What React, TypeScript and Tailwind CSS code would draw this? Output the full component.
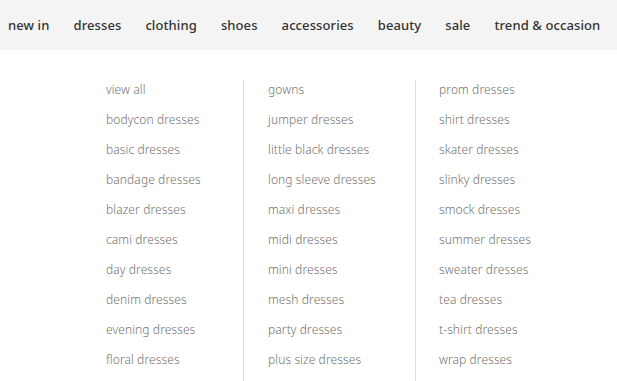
import React from "react";

const nav = ["new in", "dresses", "clothing", "shoes", "accessories", "beauty", "sale", "trend & occasion"];

const cols = [
  ["view all", "bodycon dresses", "basic dresses", "bandage dresses", "blazer dresses", "cami dresses", "day dresses", "denim dresses", "evening dresses", "floral dresses"],
  ["gowns", "jumper dresses", "little black dresses", "long sleeve dresses", "maxi dresses", "midi dresses", "mini dresses", "mesh dresses", "party dresses", "plus size dresses"],
  ["prom dresses", "shirt dresses", "skater dresses", "slinky dresses", "smock dresses", "summer dresses", "sweater dresses", "tea dresses", "t-shirt dresses", "wrap dresses"],
];

export default function App() {
  return (
    <div className="w-[617px] h-[381px] overflow-hidden bg-white" style={{ fontFamily: "'Noto Sans', sans-serif" }}>
      <nav className="h-[50px] bg-[#f4f4f4] flex items-center pl-[8px] pt-[1px] gap-[24px] text-[13px] font-medium tracking-[0.1px] text-[#333333]">
        {nav.map((n) => (
          <span key={n} className="whitespace-nowrap">{n}</span>
        ))}
      </nav>
      <div className="flex pt-[30px] pl-[106px]">
        <ul className="w-[137px] flex flex-col gap-[10px] pb-[20px]">
          {cols[0].map((t) => (
            <li key={t} className="h-[20px] leading-[20px] text-[12px] text-[#737373] font-light tracking-[0.1px] whitespace-nowrap">{t}</li>
          ))}
        </ul>
        <ul className="w-[172px] border-l border-[#dcdcdc] pl-[24px] flex flex-col gap-[10px] pb-[20px]">
          {cols[1].map((t) => (
            <li key={t} className="h-[20px] leading-[20px] text-[12px] text-[#737373] font-light tracking-[0.1px] whitespace-nowrap">{t}</li>
          ))}
        </ul>
        <ul className="border-l border-[#dcdcdc] pl-[23px] flex flex-col gap-[10px] pb-[20px]">
          {cols[2].map((t) => (
            <li key={t} className="h-[20px] leading-[20px] text-[12px] text-[#737373] font-light tracking-[0.1px] whitespace-nowrap">{t}</li>
          ))}
        </ul>
      </div>
    </div>
  );
}
